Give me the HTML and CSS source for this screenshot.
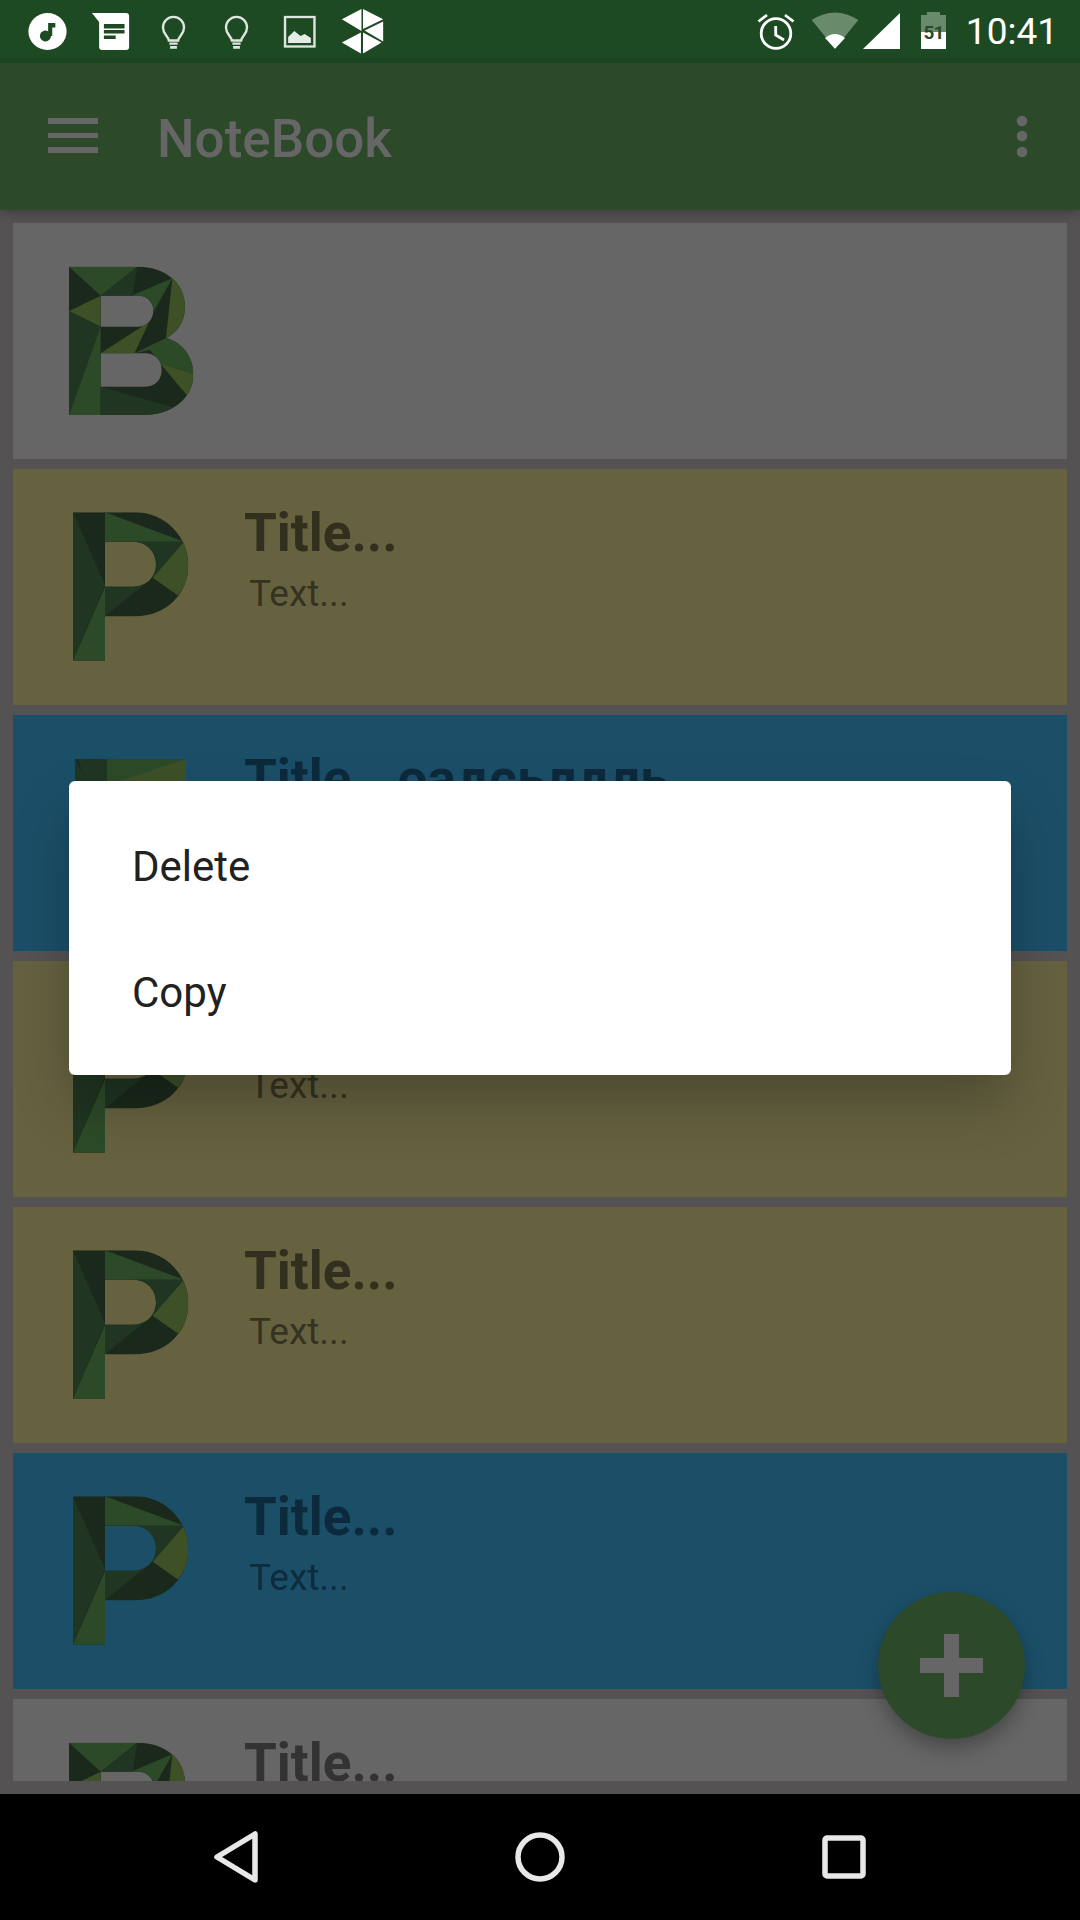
FILE: index.html
```html
<!DOCTYPE html>
<html lang="en">
<head>
<meta charset="utf-8">
<title>NoteBook</title>
<link rel="stylesheet" href="styles.css">
</head>
<body>
<svg class="defs" aria-hidden="true">
  <defs>
    <clipPath id="clip-b"><path clip-rule="evenodd" d="M57,50 L265,50 C340,50 405,95 405,170 C405,215 380,250 348,264 C395,275 430,320 430,372 C430,450 360,495 280,495 L57,495 Z M152,137 L265,137 C290,137 310,155 310,180 C310,210 290,230 265,230 L152,230 Z M152,310 L285,310 C315,310 335,330 335,360 C335,390 315,410 285,410 L152,410 Z"/></clipPath>
    <clipPath id="clip-p"><path clip-rule="evenodd" d="M69,49 L255,49 C345,49 415,122 415,207 C415,297 345,361 255,361 L165,361 L165,494 L69,494 Z M165,137 L250,137 C290,137 318,167 318,205 C318,242 290,272 250,272 L165,272 Z"/></clipPath>
    <clipPath id="clip-f"><path d="M75,51 H408 V183 H171 V497 H75 Z"/></clipPath>
    <g id="letter-b" clip-path="url(#clip-b)">
      <rect class="f-dark" x="40" y="40" width="410" height="470"/>
      <polygon class="f-green" points="57,50 262,50 152,137"/>
      <polygon class="f-mid" points="262,50 152,137 248,135"/>
      <polygon class="f-green" points="248,135 367,85 308,190 270,170"/>
      <polygon class="f-olive" points="367,85 440,100 440,240 348,264"/>
      <polygon class="f-olive" points="57,183 152,137 152,230"/>
      <polygon class="f-mid" points="57,183 152,230 57,495"/>
      <polygon class="f-green" points="152,230 152,495 57,495"/>
      <polygon class="f-olive" points="298,215 253,310 152,310"/>
      <polygon class="f-green" points="253,310 348,264 440,290 440,375 330,340 300,300"/>
      <polygon class="f-olive" points="330,340 440,375 440,440 410,435"/>
      <polygon class="f-mid" points="152,410 370,472 320,510 152,510"/>
    </g>
    <g id="letter-p" clip-path="url(#clip-p)">
      <rect class="f-dark" x="60" y="40" width="370" height="460"/>
      <polygon class="f-mid" points="69,49 165,267 69,494"/>
      <polygon class="f-green" points="165,272 165,494 69,494"/>
      <polygon class="f-green" points="165,49 402,137 165,137"/>
      <polygon class="f-mid" points="402,137 240,137 240,245 308,245"/>
      <polygon class="f-olive" points="402,137 308,245 385,299 440,207"/>
      <polygon class="f-mid" points="165,260 290,260 165,361"/>
    </g>
    <g id="letter-f" clip-path="url(#clip-f)">
      <polygon class="f-mid" points="75,51 108,117 75,117"/>
      <polygon class="f-dark" points="75,51 85,51 108,117"/>
      <polygon class="f-mid" points="85,51 171,51 171,117 108,117"/>
      <polygon class="f-green" points="171,51 408,51 210,117 171,117"/>
      <polygon class="f-olive" points="408,51 408,117 210,117"/>
    </g>
  </defs>
</svg>

<div class="phone">
  <header class="status">
    <div class="status-left">
      <svg class="slot" viewBox="15.5 0 61 63" preserveAspectRatio="none"><circle class="w" cx="46" cy="31.5" r="18.5"/><circle class="g" cx="44" cy="36" r="5.4"/><path class="g" d="M46.6 23h7v4.4h-3V36h-4z"/></svg>
      <svg class="slot" viewBox="76.5 0 61 63" preserveAspectRatio="none"><path class="w" d="M89 13H122a3 3 0 0 1 3 3V47a3 3 0 0 1-3 3H99a3 3 0 0 1-3-3V22Z"/><path class="g" d="M100.6 24h20v4.5h-20zM100.6 30h20v3.6h-20zM100.6 35.5h11.4v3.5h-11.4z"/></svg>
      <svg class="slot" viewBox="137.5 0 61 63" preserveAspectRatio="none"><path class="line" d="M163.5 40.5C163 36 157.8 34.5 157.8 27.5A10.2 10.700 0 0 1 178.2 27.5C178.2 34.5 173 36 172.5 40.5Z"/><path class="bulb-base" d="M164 42.5h8v2.2h-8zM164.700 46h6.6v2.8h-6.6z"/></svg>
      <svg class="slot" viewBox="198.5 0 61 63" preserveAspectRatio="none"><path class="line" d="M224.5 40.5C224 36 218.8 34.5 218.8 27.5A10.2 10.700 0 0 1 239.2 27.5C239.2 34.5 234 36 233.5 40.5Z"/><path class="bulb-base" d="M225 42.5h8v2.2h-8zM225.700 46h6.6v2.8h-6.6z"/></svg>
      <svg class="slot" viewBox="259.5 0 61 63" preserveAspectRatio="none"><rect class="line" x="276" y="17" width="28.5" height="29.5"/><path class="w-soft" d="M279 37l6-6 6 5 4-2 6 4v5H279z"/></svg>
      <svg class="slot" viewBox="320.5 0 61 63" preserveAspectRatio="none"><path class="w" d="M331 19.3L350 9V31ZM351.5 9L371 19.3 351.5 29ZM353 30.5L371 21.5V41.5ZM351.5 32.5L369.5 42.5 351.5 53.5ZM331 42.5L349.5 32.5V53.5Z"/></svg>
    </div>
    <div class="status-right">
      <svg class="s-alarm" viewBox="755 0 50 63"><circle class="stroke-w" cx="777" cy="33.5" r="14.8"/><path class="stroke-w" d="M759.5 21.5L768 15M786 15L794.5 21.5M776.7 26V35L785 40"/></svg>
      <svg class="s-wifi" viewBox="805 0 57 63"><path class="dim" d="M836 48.7L812.7 20Q836 5 859.3 20Z"/><path class="w" d="M836 48.7L826 38Q836 30 846 38Z"/></svg>
      <svg class="s-signal" viewBox="862 0 43 63"><path class="w" d="M864 49L901 13V49Z"/></svg>
      <svg class="s-battery" viewBox="915 0 35 63"><path class="dim" d="M928 12h13v3h6V32H922V15h6z"/><rect class="w" x="922" y="32" width="25" height="17"/><text class="batt-text" x="934.5" y="39">51</text></svg>
      <span class="time">10:41</span>
    </div>
  </header>

  <div class="toolbar">
    <svg class="menu" viewBox="0 0 50 36" preserveAspectRatio="none"><path d="M0 0h50v6H0zM0 15h50v5H0zM0 29h50v6H0z"/></svg>
    <h1 class="app-title">NoteBook</h1>
    <svg class="more" viewBox="0 0 12 42"><circle cx="6" cy="6" r="5.3"/><circle cx="6" cy="21" r="5.3"/><circle cx="6" cy="37" r="5.3"/></svg>
  </div>

  <main class="content">
    <div class="list">
      <article class="card grey">
        <svg class="letter" viewBox="0 0 480 540"><use href="#letter-b"/></svg>
      </article>
      <article class="card yellow">
        <svg class="letter" viewBox="0 0 480 540"><use href="#letter-p"/></svg>
        <div class="note"><div class="note-title">Title...</div><div class="note-text">Text...</div></div>
      </article>
      <article class="card blue">
        <svg class="letter" viewBox="0 0 480 540"><use href="#letter-f"/></svg>
        <div class="note"><div class="note-title">Title...оадсьлдль</div></div>
      </article>
      <article class="card yellow">
        <svg class="letter" viewBox="0 0 480 540"><use href="#letter-p"/></svg>
        <div class="note"><div class="note-title">Title...</div><div class="note-text">Text...</div></div>
      </article>
      <article class="card yellow">
        <svg class="letter" viewBox="0 0 480 540"><use href="#letter-p"/></svg>
        <div class="note"><div class="note-title">Title...</div><div class="note-text">Text...</div></div>
      </article>
      <article class="card blue">
        <svg class="letter" viewBox="0 0 480 540"><use href="#letter-p"/></svg>
        <div class="note"><div class="note-title">Title...</div><div class="note-text">Text...</div></div>
      </article>
      <article class="card grey">
        <svg class="letter" viewBox="0 0 480 540"><use href="#letter-b"/></svg>
        <div class="note"><div class="note-title">Title...</div></div>
      </article>
    </div>
  </main>

  <nav class="navbar">
    <svg class="nav-back" viewBox="0 0 50 56"><path d="M5 28L43 5V51Z"/></svg>
    <svg class="nav-home" viewBox="0 0 50 50"><circle cx="25" cy="25" r="22"/></svg>
    <svg class="nav-recent" viewBox="0 0 44 44"><rect x="3" y="3" width="38" height="38" rx="2"/></svg>
  </nav>

  <button class="fab" aria-label="Add"><svg viewBox="0 0 63 63"><path d="M24 0h15v24h24v15H39v24H24V39H0V24h24z"/></svg></button>

  <div class="dialog">
    <div class="dialog-item">Delete</div>
    <div class="dialog-item">Copy</div>
  </div>
</div>
</body>
</html>
```

FILE: styles.css
```css
* { box-sizing: border-box; }
html, body { margin: 0; padding: 0; }
body { width: 1080px; height: 1920px; overflow: hidden; background: #000; font-family: Roboto, "Noto Sans", sans-serif; }
.defs { position: absolute; width: 0; height: 0; }

.f-dark { fill: #1b291c; }
.f-mid { fill: #203522; }
.f-green { fill: #2c4a28; }
.f-olive { fill: #3d5026; }

.phone { position: relative; width: 1080px; height: 1920px; display: flex; flex-direction: column; overflow: hidden; }

/* status bar */
.status { flex: none; height: 63px; display: flex; justify-content: space-between; padding: 0 22px 0 16px; background: linear-gradient(#1e4a23 0, #1e4a23 54px, #1b4320 63px); position: relative; z-index: 2; }
.status-left, .status-right { display: flex; align-items: center; }
.slot { width: 63px; height: 63px; display: block; flex: none; }
.w { fill: #fff; }
.g { fill: #1e4a23; }
.w-soft { fill: #e6ebe6; }
.dim { fill: #6a8a6c; }
.line { fill: none; stroke: #dfe6df; stroke-width: 2.3; }
.bulb-base { fill: #dfe6df; }
.stroke-w { fill: none; stroke: #fff; stroke-width: 2.8; }
.s-alarm { width: 50px; height: 63px; }
.s-wifi { width: 57px; height: 63px; }
.s-signal { width: 43px; height: 63px; margin-right: 10px; }
.s-battery { width: 35px; height: 63px; }
.batt-text { fill: #2a4a30; font: 700 19px Roboto, sans-serif; text-anchor: middle; letter-spacing: -1px; }
.time { margin-left: 17px; color: #fff; font-size: 37px; line-height: 63px; font-weight: 400; }

/* toolbar */
.toolbar { flex: none; height: 147px; display: flex; align-items: center; background: #2c4a2a; padding: 0 52px 0 48px; position: relative; z-index: 1; box-shadow: 0 4px 10px rgba(0, 0, 0, .22); }
.menu { width: 50px; height: 36px; fill: #666; margin-top: -2px; }
.app-title { margin: 0 0 0 59px; font-size: 53px; line-height: 60px; font-weight: 500; color: #666; flex: 1; position: relative; top: 2px; }
.more { width: 12px; height: 42px; fill: #666; margin-top: -2px; }

/* list */
.content { flex: none; height: 1584px; background: #545253; padding: 13px 13px 13px; }
.list { height: 1558px; display: flex; flex-direction: column; gap: 10px; overflow: hidden; }
.card { flex: none; height: 236px; display: flex; padding: 27px 0 0 37px; }
.grey { background: #666; color: #333; }
.yellow { background: #666240; color: #332f1f; }
.blue { background: #1b4f68; color: #0c2a3b; }
.letter { flex: none; width: 160px; height: 180px; display: block; }
.note { margin-left: 34px; padding-top: 7px; }
.note-title { font-size: 53px; line-height: 60px; font-weight: 700; white-space: nowrap; }
.note-text { margin: 9px 0 0 5px; font-size: 37px; line-height: 44px; opacity: .92; }

/* nav bar */
.navbar { flex: none; height: 126px; background: #000; position: relative; }
.navbar svg { position: absolute; fill: none; stroke: #e8e8e8; stroke-width: 5.5; stroke-linejoin: round; }
.nav-back { left: 212px; top: 35px; width: 50px; height: 56px; }
.nav-home { left: 515px; top: 38px; width: 50px; height: 50px; }
.nav-recent { left: 822px; top: 41px; width: 44px; height: 44px; }

/* overlays */
.fab { position: absolute; left: 878px; top: 1592px; width: 147px; height: 147px; border: 0; padding: 42px; border-radius: 50%; background: #2c4a2a; box-shadow: 0 9px 20px rgba(0, 0, 0, .3); }
.fab svg { display: block; width: 63px; height: 63px; fill: #666; }

.dialog { position: absolute; left: 69px; top: 781px; width: 942px; height: 294px; padding: 23px 0 19px; background: #fff; border-radius: 6px; box-shadow: 0 30px 55px rgba(0, 0, 0, .24); }
.dialog-item { height: 126px; line-height: 126px; padding-left: 63px; font-size: 42px; color: #212121; }
```
